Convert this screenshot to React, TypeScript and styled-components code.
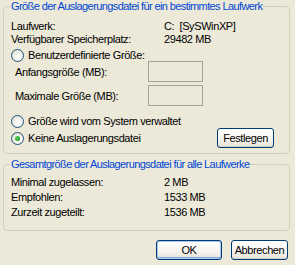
import React from "react";
import styled, { createGlobalStyle } from "styled-components";

const Global = createGlobalStyle`
  html, body { margin: 0; padding: 0; background: #ECE9D8; }
  body { font-family: "Liberation Sans", Arial, sans-serif; font-size: 11px; letter-spacing: -0.4px; color: #000; }
`;

const Dialog = styled.div`
  width: 295px;
  height: 265px;
  background: #ECE9D8;
  box-sizing: border-box;
  padding: 0 5px 0 3px;
  display: flex;
  flex-direction: column;
`;

const Group = styled.fieldset<{ $h: number; $top?: number }>`
  margin: ${(p) => p.$top ?? 0}px 0 0 0;
  padding: 0 6px 0 6px;
  border: 1px solid #D0D0BF;
  border-radius: 4px;
  height: ${(p) => p.$h}px;
  box-sizing: border-box;
  min-width: 0;
`;

const Legend = styled.legend`
  color: #0046D5;
  padding: 0 1px;
  margin-left: 0;
  line-height: 13px;
  white-space: nowrap;
  letter-spacing: -0.6px;
`;

const InfoGrid = styled.div<{ $top: number; $row: number }>`
  display: grid;
  grid-template-columns: 153px 1fr;
  grid-auto-rows: ${(p) => p.$row}px;
  align-items: center;
  margin-top: ${(p) => p.$top}px;
  margin-left: 1px;
`;

const RadioRow = styled.label<{ $top: number }>`
  display: flex;
  align-items: center;
  gap: 4px;
  height: 14px;
  margin-top: ${(p) => p.$top}px;
  margin-left: 1px;
`;

const RadioCircle = styled.span<{ $on?: boolean }>`
  width: 11px;
  height: 11px;
  border-radius: 50%;
  border: 1px solid #1C5180;
  background: radial-gradient(circle at 60% 60%, #ffffff 0%, #f2f1ea 45%, #d6d4c9 100%);
  display: flex;
  align-items: center;
  justify-content: center;
  flex: none;
  &::after {
    content: "";
    display: ${(p) => (p.$on ? "block" : "none")};
    width: 5px;
    height: 5px;
    border-radius: 50%;
    background: radial-gradient(circle at 35% 35%, #55d455 0%, #21a121 70%, #1a801a 100%);
  }
`;

const SizeRow = styled.div<{ $top: number }>`
  display: grid;
  grid-template-columns: 133px 55px;
  align-items: center;
  height: 21px;
  margin-top: ${(p) => p.$top}px;
  padding-left: 5px;
`;

const SizeInput = styled.div`
  width: 55px;
  height: 21px;
  box-sizing: border-box;
  border: 1px solid #A5A597;
  background: #ECE9D8;
`;

const BottomRow = styled.div`
  display: flex;
  align-items: center;
  justify-content: space-between;
  margin-top: 0;
  padding-right: 9px;
`;

const Button = styled.button<{ $w: number; $default?: boolean }>`
  width: ${(p) => p.$w}px;
  height: 20px;
  box-sizing: border-box;
  border: 1px solid #003C74;
  border-radius: 3px;
  background: linear-gradient(#FFFFFF 0%, #F5F4EF 60%, #E3E1D6 100%);
  font-family: inherit;
  font-size: 11px;
  letter-spacing: -0.4px;
  color: #000;
  padding: 0;
  flex: none;
  box-shadow: ${(p) =>
    p.$default ? "inset 0 0 0 1px #A9C6F0, inset 0 -1px 0 1px #89ADE4" : "inset 0 -1px 0 #D6D0C5"};
`;

const Footer = styled.div`
  display: flex;
  justify-content: flex-end;
  gap: 9px;
  margin-top: 9px;
  padding-right: 2px;
`;

export default function App() {
  return (
    <>
      <Global />
      <Dialog>
        <Group $h={154}>
          <Legend>Größe der Auslagerungsdatei für ein bestimmtes Laufwerk</Legend>
          <InfoGrid $top={6} $row={13}>
            <span>Laufwerk:</span>
            <span>C:&nbsp;&nbsp;[SySWinXP]</span>
            <span>Verfügbarer Speicherplatz:</span>
            <span>29482 MB</span>
          </InfoGrid>
          <RadioRow $top={3}>
            <RadioCircle />
            <span>Benutzerdefinierte Größe:</span>
          </RadioRow>
          <SizeRow $top={-1}>
            <span>Anfangsgröße (MB):</span>
            <SizeInput />
          </SizeRow>
          <SizeRow $top={3}>
            <span>Maximale Größe (MB):</span>
            <SizeInput />
          </SizeRow>
          <RadioRow $top={8}>
            <RadioCircle />
            <span>Größe wird vom System verwaltet</span>
          </RadioRow>
          <BottomRow>
            <RadioRow $top={0}>
              <RadioCircle $on />
              <span>Keine Auslagerungsdatei</span>
            </RadioRow>
            <Button $w={57}>Festlegen</Button>
          </BottomRow>
        </Group>
        <Group $h={73} $top={4}>
          <Legend>Gesamtgröße der Auslagerungsdatei für alle Laufwerke</Legend>
          <InfoGrid $top={3} $row={15}>
            <span>Minimal zugelassen:</span>
            <span>2 MB</span>
            <span>Empfohlen:</span>
            <span>1533 MB</span>
            <span>Zurzeit zugeteilt:</span>
            <span>1536 MB</span>
          </InfoGrid>
        </Group>
        <Footer>
          <Button $w={66} $default>OK</Button>
          <Button $w={57}>Abbrechen</Button>
        </Footer>
      </Dialog>
    </>
  );
}
